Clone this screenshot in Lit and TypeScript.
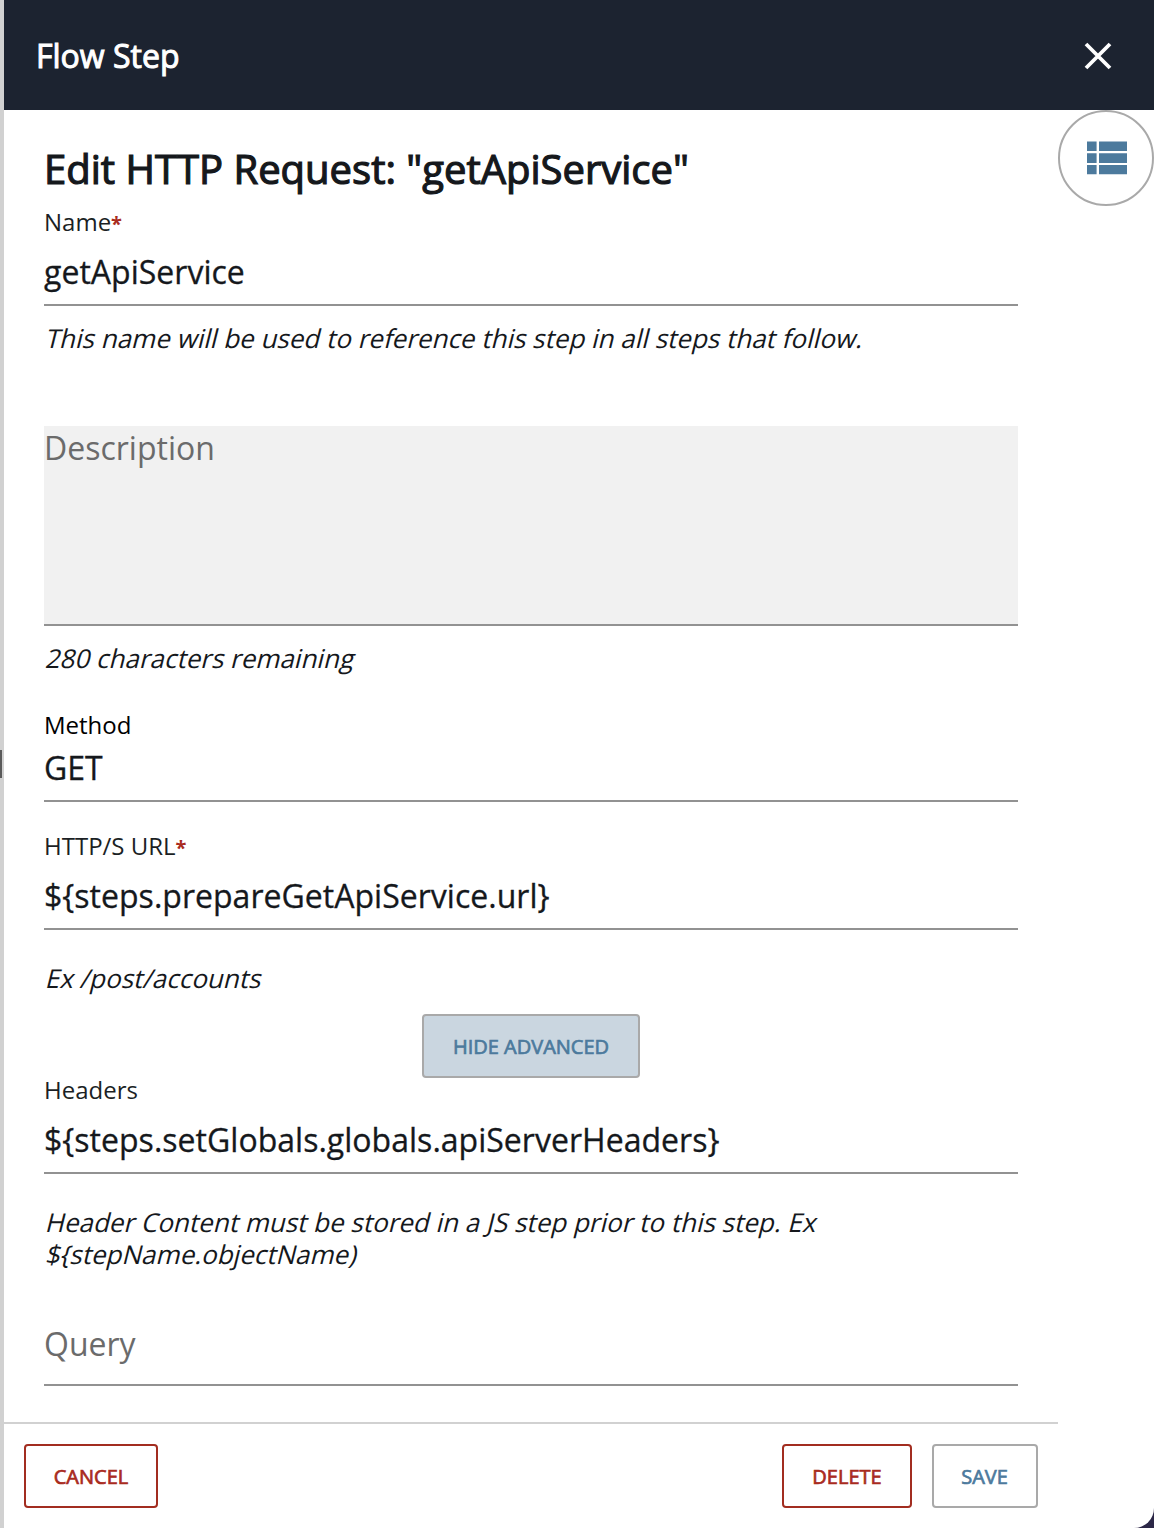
import { LitElement, html, css, nothing } from "lit";
import { customElement, property } from "lit/decorators.js";

@customElement("form-field")
class FormField extends LitElement {
  @property() label = "";
  @property() value = "";
  @property() hint = "";
  @property() placeholder = "";
  @property({ type: Boolean }) required = false;

  static styles = css`
    :host { display: block; }
    .label { height: 24px; line-height: 24px; font-size: 24px; color: var(--label-color, #1b1f24); margin-bottom: var(--label-gap, 16px); white-space: nowrap; }
    .star { color: #a92b1e; font-weight: 700; font-size: 20px; line-height: 20px; }
    .control { box-sizing: border-box; height: var(--control-height, 56px); line-height: 44px; font-size: 32px; border-bottom: 2px solid #929292; background: var(--control-bg, transparent); color: #15181c; white-space: nowrap; }
    .value { letter-spacing: 0.02px; -webkit-text-stroke: 0.3px #15181c; }
    .placeholder { color: #6b6b6b; }
    .hint { margin-top: var(--hint-gap, 16px); font-size: 26px; line-height: 32px; color: #15181c; }
    .line { padding-left: 0.5px; transform: skewX(-14deg); transform-origin: 0 26px; white-space: nowrap; }
  `;

  render() {
    return html`
      ${this.label ? html`<div class="label">${this.label}${this.required ? html`<span class="star">*</span>` : nothing}</div>` : nothing}
      <div class="control">${this.value
        ? html`<span class="value">${this.value}</span>`
        : html`<span class="placeholder">${this.placeholder}</span>`}</div>
      ${this.hint ? html`<div class="hint">${this.hint.split("|").map((line) => html`<div class="line">${line}</div>`)}</div>` : nothing}
    `;
  }
}

@customElement("app-root")
class AppRoot extends LitElement {
  static styles = css`
    :host { display: block; font-family: "Open Sans", "Noto Sans", sans-serif; }
    .page { display: flex; width: 1154px; height: 1528px; overflow: hidden; background: #2c2747; }
    .rail { flex: none; display: flex; align-items: flex-start; width: 4px; background: #d1d1d1; }
    .grip { width: 2px; height: 28px; margin-top: 750px; background: #5a5a5a; }
    .panel { flex: 1; display: flex; flex-direction: column; background: #fff; border-bottom-right-radius: 20px; overflow: hidden; }
    .top { flex: none; display: flex; justify-content: space-between; align-items: center; height: 110px; box-sizing: border-box; padding: 0 42px 0 32px; background: #1c2330; }
    .title { font-size: 32px; line-height: 44px; margin-top: 2px; color: #fff; -webkit-text-stroke: 1px #fff; }
    .close { display: block; margin-top: 2px; }
    .main { flex: 1; display: flex; }
    .form { width: 1054px; display: flex; flex-direction: column; }
    .body { flex: none; height: 1312px; box-sizing: border-box; padding: 32px 40px 0; }
    .heading { font-size: 40px; line-height: 54px; margin-bottom: 14px; color: #15181c; -webkit-text-stroke: 1.2px #15181c; white-space: nowrap; }
    .description { --control-height: 200px; --control-bg: #f1f1f1; margin-top: 72px; }
    .method { --label-gap: 9px; --label-color: #000; margin-top: 39px; }
    .url { --hint-gap: 32px; margin-top: 32px; }
    .headers { --hint-gap: 32px; }
    .query { --control-height: 64px; margin-top: 52px; }
    .advanced { display: flex; justify-content: center; margin-top: 20px; }
    .footer { display: flex; gap: 20px; border-top: 2px solid #d1d1d1; padding: 20px 20px 0; }
    .spacer { flex: 1; }
    .btn { box-sizing: border-box; height: 64px; padding: 1px 0 0; border: 2px solid #a9a9a9; border-radius: 4px; background: #fff; color: #4c7a9d; font: 20px/60px "Open Sans", sans-serif; -webkit-text-stroke: 0.7px currentColor; text-align: center; }
    .btn.danger { border-color: #a22d20; color: #a92b1e; }
    .btn.active { background: #cad6e0; width: 218px; }
    .cancel { width: 134px; }
    .delete { width: 130px; }
    .btn.save { width: 106px; padding-right: 1px; }
    .side { width: 96px; }
    .round { display: flex; align-items: center; justify-content: center; box-sizing: border-box; width: 96px; height: 96px; border: 2px solid #a9a9a9; border-radius: 50%; background: #fff; padding: 0 0 0 2px; }
  `;

  render() {
    return html`
      <div class="page">
        <div class="rail"><div class="grip"></div></div>
        <div class="panel">
          <div class="top">
            <div class="title">Flow Step</div>
            <svg class="close" width="28" height="28" viewBox="0 0 28 28"><path d="M2 2L26 26M26 2L2 26" stroke="#fff" stroke-width="3.8" fill="none"/></svg>
          </div>
          <div class="main">
            <div class="form">
              <div class="body">
                <div class="heading">Edit HTTP Request: "getApiService"</div>
                <form-field label="Name" required value="getApiService" hint="This name will be used to reference this step in all steps that follow."></form-field>
                <form-field class="description" placeholder="Description" hint="280 characters remaining"></form-field>
                <form-field class="method" label="Method" value="GET"></form-field>
                <form-field class="url" label="HTTP/S URL" required value="\${steps.prepareGetApiService.url}" hint="Ex /post/accounts"></form-field>
                <div class="advanced"><button class="btn active">HIDE ADVANCED</button></div>
                <form-field class="headers" label="Headers" value="\${steps.setGlobals.globals.apiServerHeaders}" hint="Header Content must be stored in a JS step prior to this step. Ex|\${stepName.objectName)"></form-field>
                <form-field class="query" placeholder="Query"></form-field>
              </div>
              <div class="footer">
                <button class="btn danger cancel">CANCEL</button>
                <div class="spacer"></div>
                <button class="btn danger delete">DELETE</button>
                <button class="btn save">SAVE</button>
              </div>
            </div>
            <div class="side">
              <div class="round">
                <svg width="40" height="34" viewBox="0 0 40 34" fill="#4c7a9d">
                  <path d="M0 .5h9.6v9.5H0zM12 .5h28v9.5H12zM0 12.3h9.6v9.7H0zM12 12.3h28v9.7H12zM0 24h9.6v9.3H0zM12 24h28v9.3H12z"/>
                </svg>
              </div>
            </div>
          </div>
        </div>
      </div>
    `;
  }
}
